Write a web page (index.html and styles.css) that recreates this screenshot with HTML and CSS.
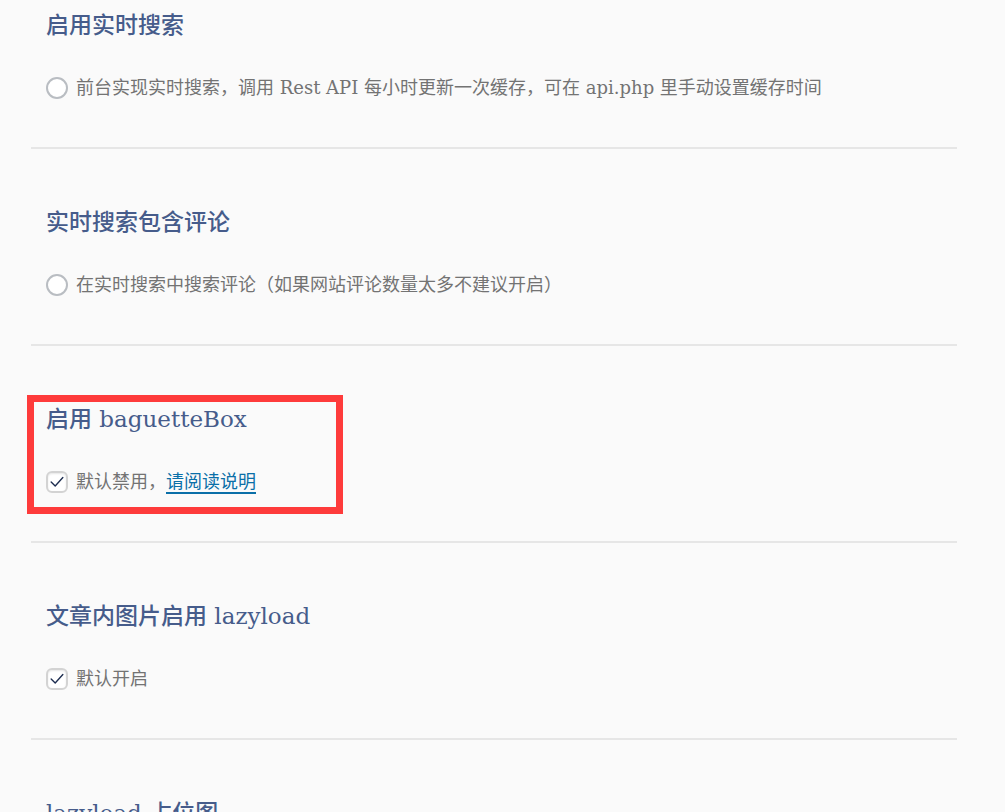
FILE: index.html
```html
<!DOCTYPE html>
<html lang="zh-CN">
<head>
<meta charset="utf-8">
<title>设置</title>
<link rel="stylesheet" href="styles.css">
</head>
<body>
<div class="options">
  <section class="option">
    <h3 class="option-title">启用实时搜索</h3>
    <label class="option-row">
      <span class="radio"></span>
      <span class="option-desc">前台实现实时搜索，调用 Rest API 每小时更新一次缓存，可在 api.php 里手动设置缓存时间</span>
    </label>
  </section>
  <section class="option">
    <h3 class="option-title">实时搜索包含评论</h3>
    <label class="option-row">
      <span class="radio"></span>
      <span class="option-desc">在实时搜索中搜索评论（如果网站评论数量太多不建议开启）</span>
    </label>
  </section>
  <section class="option highlighted">
    <div class="highlight-box"></div>
    <h3 class="option-title">启用 baguetteBox</h3>
    <label class="option-row">
      <span class="checkbox"><svg viewBox="0 0 20 20" width="20" height="20"><path d="M3.5 10 L8 14.5 L16.5 5" fill="none" stroke="#1d2d50" stroke-width="1.5" stroke-linecap="round" stroke-linejoin="round"/></svg></span>
      <span class="option-desc">默认禁用，<a class="doc-link" href="#">请阅读说明</a></span>
    </label>
  </section>
  <section class="option">
    <h3 class="option-title">文章内图片启用 lazyload</h3>
    <label class="option-row">
      <span class="checkbox"><svg viewBox="0 0 20 20" width="20" height="20"><path d="M3.5 10 L8 14.5 L16.5 5" fill="none" stroke="#1d2d50" stroke-width="1.5" stroke-linecap="round" stroke-linejoin="round"/></svg></span>
      <span class="option-desc">默认开启</span>
    </label>
  </section>
  <section class="option">
    <h3 class="option-title">lazyload 占位图</h3>
  </section>
</div>
</body>
</html>
```

FILE: styles.css
```css
html, body {
  margin: 0;
  padding: 0;
  background: #fafafa;
  overflow: hidden;
}

body {
  font-family: "DejaVu Serif", "Noto Sans CJK SC", serif;
}

.options {
  width: 926px;
  margin: -48px 0 0 31px;
}

.option {
  position: relative;
  box-sizing: border-box;
  height: 197px;
  padding: 57px 15px 0;
  border-bottom: 2px solid #e6e6e6;
}

.option-title {
  margin: 0;
  font-size: 23px;
  line-height: 32px;
  font-weight: 500;
  color: #465c8b;
}

.option-row {
  display: flex;
  align-items: center;
  gap: 8px;
  margin-top: 33px;
  height: 28px;
}

.option-desc {
  font-size: 18px;
  line-height: 28px;
  color: #737373;
}

.radio {
  width: 22px;
  height: 22px;
  box-sizing: border-box;
  border: 2px solid #b9bdc2;
  border-radius: 50%;
  background: #fff;
  flex: none;
}

.checkbox {
  width: 22px;
  height: 22px;
  box-sizing: border-box;
  border: 2px solid #d3d3d3;
  border-radius: 6px;
  background: #fff;
  flex: none;
  display: flex;
  align-items: center;
  justify-content: center;
  box-shadow: inset 0 1px 2px rgba(0,0,0,0.1);
}

.checkbox svg {
  display: block;
  width: 18px;
  height: 18px;
}

.doc-link {
  color: #0a6fa8;
  text-decoration: underline;
  text-decoration-thickness: 2px;
  text-underline-offset: 4px;
}

.highlight-box {
  position: absolute;
  left: -4px;
  top: 49px;
  width: 316px;
  height: 119px;
  box-sizing: border-box;
  border: 7px solid #fe3b3b;
  pointer-events: none;
}
```
